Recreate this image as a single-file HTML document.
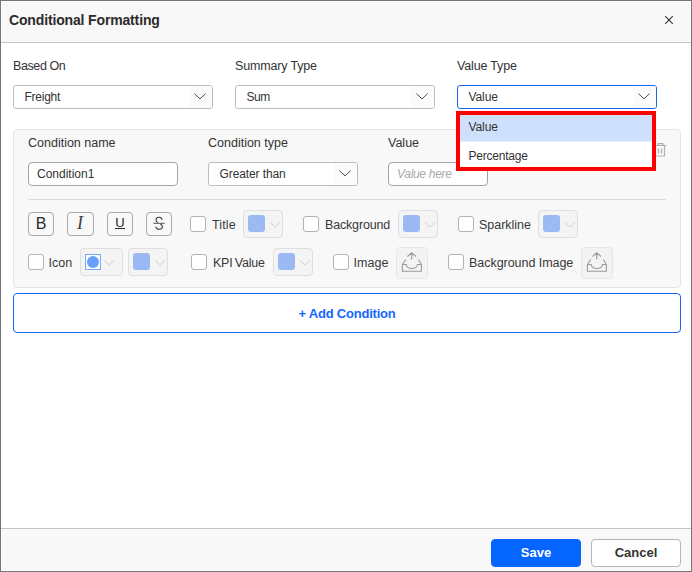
<!DOCTYPE html>
<html>
<head>
<meta charset="utf-8">
<style>
*{box-sizing:border-box;margin:0;padding:0}
html,body{width:692px;height:572px;overflow:hidden;background:#fff}
body{font-family:"Liberation Sans",sans-serif;color:#333;font-size:12px;position:relative}
.abs{position:absolute}
#frame{position:absolute;left:0;top:0;width:692px;height:572px;border:1px solid #757575;z-index:50;pointer-events:none}
#hdr{position:absolute;left:2px;top:2px;width:688px;height:40px;background:#f8f8f8}
#hdrline{position:absolute;left:1px;top:42px;width:690px;height:1px;background:#c4c4c4}
#title{position:absolute;left:9px;top:11px;font-size:14px;font-weight:bold;color:#2b2b2b;line-height:18px;white-space:nowrap;letter-spacing:-0.15px}
.lbl{position:absolute;font-size:12.5px;color:#333;line-height:16px;white-space:nowrap}
.dd{position:absolute;height:24px;border:1px solid #bdbdbd;border-radius:3px;background:#fff;overflow:hidden}
.dd .t{position:absolute;left:11px;top:4px;font-size:12px;line-height:15px;color:#333;white-space:nowrap}
.dd .ar{position:absolute;right:0;top:0;width:23px;height:22px;background:#fbfbfb}
.dd svg{position:absolute;right:6.5px;top:7.4px}
.inp{position:absolute;height:24px;border:1px solid #a3a3a3;border-radius:4px;background:#fff}
.inp .t{position:absolute;left:8px;top:4px;font-size:12px;line-height:15px;color:#333;white-space:nowrap}
#panel{position:absolute;left:13px;top:129px;width:668px;height:159px;background:#f8f8f8;border:1px solid #e4e4e4;border-radius:4px}
.fb{position:absolute;top:212px;height:24px;border:1px solid #a8a8a8;border-radius:4px;background:#f8f8f8;text-align:center;color:#2a2a2a}
.cb{position:absolute;width:16px;height:16px;border:1px solid #b3b3b3;border-radius:3px;background:#fff}
.cl{position:absolute;font-size:12.5px;line-height:16px;color:#383838;white-space:nowrap}
.cd{position:absolute;width:40px;height:28px;border:1px solid #dfdfdf;border-radius:4px;background:#f4f4f4}
.cd .sq{position:absolute;left:4px;top:4px;width:17px;height:17px;background:#9bbaf3;border-radius:3px}
.cd svg{position:absolute;left:26.3px;top:11px}
.up{position:absolute;width:32px;height:32px;border:1px solid #e6e6e6;border-radius:4px;background:#f3f3f3}
.up svg{position:absolute;left:4px;top:4px}
#add{position:absolute;left:13px;top:293px;width:668px;height:40px;border:1px solid #1766f5;border-radius:4px;background:#fff;text-align:center;font-size:13px;font-weight:bold;color:#1565ff;line-height:40px;letter-spacing:-0.22px}
#ftr{position:absolute;left:2px;top:529px;width:688px;height:41px;background:#f8f8f8}
#ftrline{position:absolute;left:1px;top:528px;width:690px;height:1px;background:#c4c4c4}
.btn{position:absolute;top:539px;width:90px;height:28px;border-radius:4px;font-size:13px;font-weight:bold;text-align:center;line-height:26px}
#save{left:491px;background:#0565ff;border:1px solid #0565ff;color:#fff}
#cancel{left:591px;background:#fff;border:1px solid #b5b5b5;color:#333}
#pop{position:absolute;left:456px;top:111px;width:200px;height:60px;background:#fff;border:4px solid #fe0000}
#pop .r1{position:absolute;left:0;top:0;width:192px;height:27px;background:linear-gradient(#cfe0fc 0,#cfe0fc 26px,#e7effd 26px,#e7effd 27px)}
#pop .t{position:absolute;left:8.5px;font-size:12px;line-height:15px;color:#333}
</style>
</head>
<body>
<div id="hdr"></div><div id="hdrline"></div>
<div id="title">Conditional Formatting</div>
<svg class="abs" style="left:664px;top:15px" width="10" height="10" viewBox="0 0 10 10"><path d="M1.2 1.2 L8.8 8.8 M8.8 1.2 L1.2 8.8" stroke="#3a3a3a" stroke-width="1.15" fill="none"/></svg>

<div class="lbl" style="left:13px;top:58px;letter-spacing:-0.4px">Based On</div>
<div class="lbl" style="left:235px;top:58px;letter-spacing:-0.16px">Summary Type</div>
<div class="lbl" style="left:457px;top:58px;letter-spacing:-0.17px">Value Type</div>

<div class="dd" style="left:13px;top:85px;width:200px"><div class="ar"></div><div class="t" style="left:10.5px;letter-spacing:-0.25px">Freight</div><svg width="12" height="7" viewBox="0 0 12 7"><path d="M0.4 0.6 L6 5.9 L11.6 0.6" stroke="#4d4d4d" stroke-width="1" fill="none"/></svg></div>
<div class="dd" style="left:235px;top:85px;width:200px"><div class="ar"></div><div class="t" style="left:10.5px;letter-spacing:-0.5px">Sum</div><svg width="12" height="7" viewBox="0 0 12 7"><path d="M0.4 0.6 L6 5.9 L11.6 0.6" stroke="#4d4d4d" stroke-width="1" fill="none"/></svg></div>
<div class="dd" style="left:457px;top:85px;width:200px;border-color:#1766f5"><div class="ar"></div><div class="t" style="left:10.5px;letter-spacing:-0.1px">Value</div><svg width="12" height="7" viewBox="0 0 12 7"><path d="M0.4 0.6 L6 5.9 L11.6 0.6" stroke="#4d4d4d" stroke-width="1" fill="none"/></svg></div>

<div id="panel"></div>
<div class="lbl" style="left:28px;top:135px">Condition name</div>
<div class="lbl" style="left:208px;top:135px">Condition type</div>
<div class="lbl" style="left:388px;top:135px">Value</div>
<div class="inp" style="left:28px;top:162px;width:150px"><div class="t">Condition1</div></div>
<div class="dd" style="left:208px;top:162px;width:150px"><div class="ar"></div><div class="t" style="left:10.5px;letter-spacing:-0.1px">Greater than</div><svg width="12" height="7" viewBox="0 0 12 7"><path d="M0.4 0.6 L6 5.9 L11.6 0.6" stroke="#4d4d4d" stroke-width="1" fill="none"/></svg></div>
<div class="inp" style="left:388px;top:162px;width:100px"><div class="t" style="font-style:italic;color:#a9a9a9;letter-spacing:-0.3px">Value here</div></div>
<!-- trash -->
<svg class="abs" style="left:653px;top:142px" width="15" height="16" viewBox="0 0 15 16"><path d="M1 3.5 H13.5 M5 3.3 V1.6 H10 V3.3 M2.5 3.5 V14 H11.5 V3.5 M5.5 6.5 V11.5 M8.5 6.5 V11.5" stroke="#b0b0b0" stroke-width="1.2" fill="none"/></svg>

<div class="abs" style="left:28px;top:199px;width:638px;height:1px;background:#dcdcdc"></div>

<div class="fb" style="left:28px;width:26px;font-size:16px;line-height:22px">B</div>
<div class="fb" style="left:67px;width:27px;font-family:'Liberation Serif',serif;font-style:italic;font-size:18px;line-height:21.5px;padding-right:1px;color:#404040">I</div>
<div class="fb" style="left:107px;width:26px;font-size:13px"><div class="abs" style="left:0;top:3px;width:24px;line-height:14px">U</div><div class="abs" style="left:7.3px;top:15px;width:9.7px;height:1px;background:#2a2a2a"></div></div>
<div class="fb" style="left:146px;width:26px"><svg class="abs" style="left:-1px;top:-1px" width="26" height="24" viewBox="0 0 26 24"><path d="M16.2 7.7 C15.9 5.9 14.7 5.2 13 5.2 C11.2 5.2 10 6.2 10 7.9 C10 9.2 10.7 10 11.9 10.5 M14.3 12.1 C15.6 12.7 16.4 13.5 16.4 14.8 C16.4 16.4 15 17.3 13.1 17.3 C11.2 17.3 10 16.4 9.7 14.6" stroke="#3a3a3a" stroke-width="1.05" fill="none"/><path d="M7.4 11.3 H18.6" stroke="#555" stroke-width="1" fill="none"/></svg></div>

<div class="cb" style="left:190px;top:216px"></div><div class="cl" style="left:212px;top:217px;letter-spacing:0.12px">Title</div>
<div class="cd" style="left:243px;top:210px"><div class="sq"></div><svg width="10" height="6" viewBox="0 0 10 6"><path d="M0.3 0.5 L5 5.1 L9.7 0.5" stroke="#dadada" stroke-width="1.1" fill="none"/></svg></div>
<div class="cb" style="left:303px;top:216px"></div><div class="cl" style="left:325px;top:217px;letter-spacing:-0.17px">Background</div>
<div class="cd" style="left:398px;top:210px"><div class="sq"></div><svg width="10" height="6" viewBox="0 0 10 6"><path d="M0.3 0.5 L5 5.1 L9.7 0.5" stroke="#dadada" stroke-width="1.1" fill="none"/></svg></div>
<div class="cb" style="left:458px;top:216px"></div><div class="cl" style="left:479px;top:217px;letter-spacing:-0.02px">Sparkline</div>
<div class="cd" style="left:538px;top:210px"><div class="sq"></div><svg width="10" height="6" viewBox="0 0 10 6"><path d="M0.3 0.5 L5 5.1 L9.7 0.5" stroke="#dadada" stroke-width="1.1" fill="none"/></svg></div>

<div class="cb" style="left:28px;top:254px"></div><div class="cl" style="left:48.5px;top:255px">Icon</div>
<div class="cd" style="left:80px;top:248px;width:43px"><div class="sq" style="background:#fff;border:1px solid #7aa7f8;border-radius:0;width:16px;height:16px;left:4px;top:5px"></div><div class="abs" style="left:5.7px;top:6.7px;width:12.2px;height:12.2px;border-radius:50%;background:#67a0ff"></div><svg width="10" height="6" viewBox="0 0 10 6" style="left:23.3px"><path d="M0.3 0.5 L5 5.1 L9.7 0.5" stroke="#dadada" stroke-width="1.1" fill="none"/></svg></div>
<div class="cd" style="left:128px;top:248px"><div class="sq"></div><svg width="10" height="6" viewBox="0 0 10 6"><path d="M0.3 0.5 L5 5.1 L9.7 0.5" stroke="#dadada" stroke-width="1.1" fill="none"/></svg></div>
<div class="cb" style="left:191px;top:254px"></div><div class="cl" style="left:213px;top:255px;letter-spacing:-0.22px;word-spacing:-1px">KPI Value</div>
<div class="cd" style="left:273px;top:248px"><div class="sq"></div><svg width="10" height="6" viewBox="0 0 10 6"><path d="M0.3 0.5 L5 5.1 L9.7 0.5" stroke="#dadada" stroke-width="1.1" fill="none"/></svg></div>
<div class="cb" style="left:333px;top:254px"></div><div class="cl" style="left:353.6px;top:255px;letter-spacing:0.05px">Image</div>
<div class="up" style="left:396px;top:247px"><svg width="22" height="22" viewBox="0 0 22 22"><path d="M1.4 12.5 H5.2 A5.65 4 0 0 0 16.5 12.5 H20.4 M1.4 12.5 V19.2 H20.4 V12.5 M1.4 12.5 L4.8 7.5 M20.4 12.5 L17.4 7.5 M10.7 1 V7.5 M6.4 4.5 L10.7 0.8 L15 4.5" stroke="#9a9a9a" stroke-width="1.1" fill="none"/></svg></div>
<div class="cb" style="left:448px;top:254px"></div><div class="cl" style="left:469px;top:255px;letter-spacing:-0.04px">Background Image</div>
<div class="up" style="left:581px;top:247px"><svg width="22" height="22" viewBox="0 0 22 22"><path d="M1.4 12.5 H5.2 A5.65 4 0 0 0 16.5 12.5 H20.4 M1.4 12.5 V19.2 H20.4 V12.5 M1.4 12.5 L4.8 7.5 M20.4 12.5 L17.4 7.5 M10.7 1 V7.5 M6.4 4.5 L10.7 0.8 L15 4.5" stroke="#9a9a9a" stroke-width="1.1" fill="none"/></svg></div>

<div id="add">+ Add Condition</div>

<div id="pop"><div class="r1"></div><div class="t" style="top:5px;letter-spacing:-0.1px">Value</div><div class="t" style="top:34px;left:8.5px;letter-spacing:-0.22px">Percentage</div></div>

<div id="ftrline"></div><div id="ftr"></div>
<div class="btn" id="save">Save</div>
<div class="btn" id="cancel">Cancel</div>
<div id="frame"></div>
</body>
</html>
